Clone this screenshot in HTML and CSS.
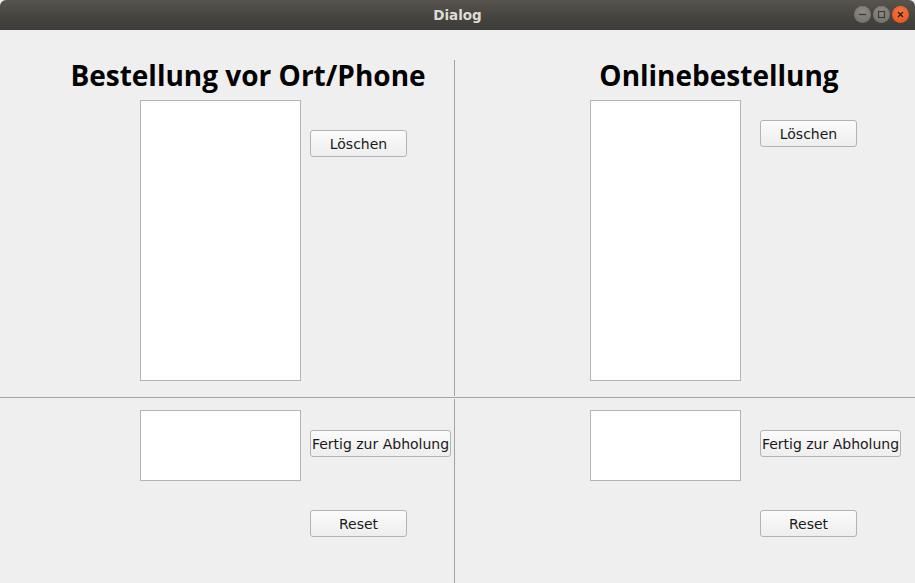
FILE: index.html
```html
<!DOCTYPE html>
<html>
<head>
<meta charset="utf-8">
<link rel="stylesheet" href="styles.css">
</head>
<body>
<div class="window">
  <div class="titlebar">
    <span class="title">Dialog</span>
    <div class="controls">
      <span class="wbtn wmin"><svg width="17" height="17" viewBox="0 0 17 17"><line x1="5" y1="8.5" x2="12" y2="8.5" stroke="#3c3b37" stroke-width="1.3"/></svg></span>
      <span class="wbtn wmax"><svg width="17" height="17" viewBox="0 0 17 17"><rect x="5.5" y="5.5" width="6" height="6" fill="none" stroke="#3c3b37" stroke-width="1.2"/></svg></span>
      <span class="wbtn wclose"><svg width="17" height="17" viewBox="0 0 17 17"><path d="M6 6 L11 11 M11 6 L6 11" stroke="#3c3b37" stroke-width="1.4"/></svg></span>
    </div>
  </div>
  <div class="content">
    <div class="cell tl">
      <h1 class="heading">Bestellung vor Ort/Phone</h1>
      <div class="row">
        <div class="list tall"></div>
        <div class="side side-l"><button class="btn">Löschen</button></div>
      </div>
    </div>
    <div class="vline top"></div>
    <div class="cell tr">
      <h1 class="heading">Onlinebestellung</h1>
      <div class="row">
        <div class="list tall narrow"></div>
        <div class="side side-r"><button class="btn">Löschen</button></div>
      </div>
    </div>
    <div class="hline"></div>
    <div class="cell bl">
      <div class="row">
        <div class="list short"></div>
        <div class="side side-l">
          <button class="btn wide">Fertig zur Abholung</button>
          <button class="btn reset">Reset</button>
        </div>
      </div>
    </div>
    <div class="vline bottom"></div>
    <div class="cell br">
      <div class="row">
        <div class="list short narrow"></div>
        <div class="side side-r">
          <button class="btn wide">Fertig zur Abholung</button>
          <button class="btn reset">Reset</button>
        </div>
      </div>
    </div>
  </div>
</div>
</body>
</html>
```
FILE: styles.css
```css
* { box-sizing: border-box; }
html, body { margin: 0; padding: 0; }
body {
  width: 915px;
  height: 583px;
  overflow: hidden;
  background: #efefef;
  font-family: "DejaVu Sans", "Noto Sans", sans-serif;
}
.window { width: 915px; height: 583px; display: flex; flex-direction: column; }
.titlebar {
  height: 30px;
  flex: none;
  background: linear-gradient(#57544e, #45433e 60%, #3f3d39);
  border-radius: 6px 6px 0 0;
  display: flex;
  align-items: center;
  justify-content: center;
  position: relative;
}
.title {
  color: #dfdbd2;
  font-family: "DejaVu Sans", sans-serif;
  font-weight: bold;
  font-size: 13.5px;
}
.controls {
  position: absolute;
  right: 6px;
  top: 6px;
  display: flex;
  gap: 2px;
}
.wbtn {
  width: 17px;
  height: 17px;
  border-radius: 50%;
  display: block;
}
.wbtn svg { display: block; }
.wmin, .wmax { background: radial-gradient(circle at 50% 35%, #8f8c86, #6f6c66); }
.wclose { background: radial-gradient(circle at 50% 35%, #f6773f, #e0501c); }
.wclose path { stroke: #2e1a10; }

.content {
  flex: 1;
  display: grid;
  grid-template-columns: 454px 1px 1fr;
  grid-template-rows: 367px 1px 1fr;
}
.vline { background: #a3a3a3; }
.vline.top { grid-column: 2; grid-row: 1; margin-top: 30px; margin-bottom: 1px; }
.vline.bottom { grid-column: 2; grid-row: 3; margin-top: 1px; }
.hline { grid-column: 1 / 4; grid-row: 2; background: #a3a3a3; }
.cell.tl { grid-column: 1; grid-row: 1; padding-left: 140px; }
.cell.tr { grid-column: 3; grid-row: 1; padding-left: 135px; }
.cell.bl { grid-column: 1; grid-row: 3; padding-left: 140px; padding-top: 12px; }
.cell.br { grid-column: 3; grid-row: 3; padding-left: 135px; padding-top: 12px; }

.heading {
  margin: 0;
  height: 70px;
  padding-top: 28px;
  font-family: "Open Sans", "DejaVu Sans", sans-serif;
  font-weight: bold;
  font-size: 28px;
  line-height: 34px;
  color: #000;
  white-space: nowrap;
}
.tl .heading { margin-left: -140px; padding-left: 42px; text-align: center; }
.tr .heading { margin-left: -135px; padding-left: 68px; text-align: center; }

.row { display: flex; align-items: flex-start; }
.list { background: #fff; border: 1px solid #b4b4b4; width: 161px; flex: none; }
.list.narrow { width: 151px; }
.list.tall { height: 281px; }
.list.short { height: 71px; }
.side { display: flex; flex-direction: column; align-items: flex-start; }
.side-l { margin-left: 9px; }
.side-r { margin-left: 19px; }
.tl .side { padding-top: 30px; }
.tr .side { padding-top: 20px; }
.bl .side, .br .side { padding-top: 20px; }

.btn {
  width: 97px;
  height: 27px;
  padding: 0;
  border: 1px solid #b3b3b3;
  border-radius: 3px;
  background: linear-gradient(#fbfbfb, #eeeeee);
  font-family: "DejaVu Sans", "Noto Sans", sans-serif;
  font-size: 14px;
  color: #1a1a1a;
  text-align: center;
  white-space: nowrap;
}
.btn.wide { width: 141px; }
.btn.reset { margin-top: 53px; }
```
